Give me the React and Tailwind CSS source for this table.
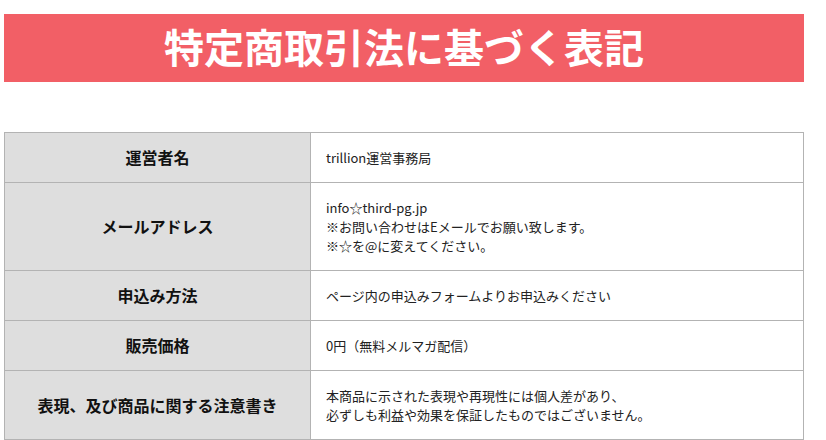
const rows = [
  { label: "運営者名", lines: ["trillion運営事務局"] },
  {
    label: "メールアドレス",
    lines: [
      "info☆third-pg.jp",
      "※お問い合わせはEメールでお願い致します。",
      "※☆を@に変えてください。",
    ],
  },
  { label: "申込み方法", lines: ["ページ内の申込みフォームよりお申込みください"] },
  { label: "販売価格", lines: ["0円（無料メルマガ配信）"] },
  {
    label: "表現、及び商品に関する注意書き",
    lines: [
      "本商品に示された表現や再現性には個人差があり、",
      "必ずしも利益や効果を保証したものではございません。",
    ],
  },
];

export default function App() {
  return (
    <div className="min-h-screen bg-white font-['Noto_Sans_CJK_JP','Noto_Sans',sans-serif] text-[#222]">
      <div className="ml-[4px] w-[800px] pt-[14px]">
        {/* heading banner */}
        <div className="flex h-[68px] items-center justify-center bg-[#f25f66] pb-[4px]">
          <h1 className="text-[40px] font-bold leading-none text-white">特定商取引法に基づく表記</h1>
        </div>

        <table className="mt-[50px] w-full border-collapse">
          <tbody>
            {rows.map((row) => (
              <tr key={row.label}>
                <th className="w-[306px] border border-[#b3b3b3] bg-[#dedede] px-[15px] py-[15px] text-center text-[16px] font-bold leading-[19px] text-[#111]">
                  {row.label}
                </th>
                <td className="border border-[#b3b3b3] px-[15px] py-[15px] text-[13px] leading-[19px]">
                  {row.lines.map((line) => (
                    <div key={line}>{line}</div>
                  ))}
                </td>
              </tr>
            ))}
          </tbody>
        </table>
      </div>
    </div>
  );
}
